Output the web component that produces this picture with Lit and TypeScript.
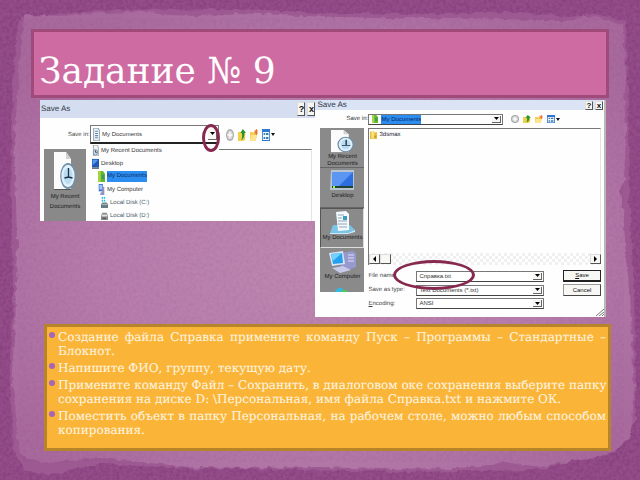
import { LitElement, html, css, svg } from "lit";
import { customElement, property } from "lit/decorators.js";

const shared = css`
  * { box-sizing: border-box; }
  .icon { display: block; flex: none; }
  .win {
    background: #fefefe; color: #333;
    font-family: "Liberation Sans", sans-serif; text-rendering: geometricPrecision;
    font-size: 6px; line-height: 10px; white-space: nowrap;
  }
  .bar { display: flex; align-items: center; gap: 2px; background: #d5def0; color: #333a4a; }
  .bar .name { flex: 1; padding-left: 1px; font-weight: normal; margin: 0; font-size: 8px; }
  button {
    font: inherit; padding: 0; margin: 0; border-radius: 0; color: #111;
    background: #f7f7f4; border: 1px solid #ddd; border-right-color: #555; border-bottom-color: #555;
  }
  .cap { font-weight: bold; font-size: 9px; line-height: 8px; width: 8px; }
  .combo { position: relative; display: flex; align-items: center; background: #fff;
    border: 1px solid #777; border-bottom: 1px solid #444; }
  .combo select {
    appearance: none; border: 0; background: transparent; font: inherit; color: #333;
    flex: 1; min-width: 0; padding: 0 10px 0 2px; margin: 0; border-radius: 0; height: 100%;
  }
  .drop { position: absolute; right: 1px; top: 1px; bottom: 1px; width: 9px; background: #f6f6f4;
    border-right: 1px solid #666; border-bottom: 1px solid #666; pointer-events: none;
    display: grid; place-items: center; }
  .tools { display: flex; align-items: center; gap: 4px; }
  .tools button { background: none; border: 0; }
  .ring { position: absolute; border: 3px solid #87294f; border-radius: 50%; pointer-events: none; }
  .place { display: flex; flex-direction: column; align-items: center; text-align: center; color: #1c1c1c; }
  ul { list-style: none; margin: 0; padding: 0; }
`;

const arrow = html`<span class="drop"><svg class="icon" width="5" height="3" viewBox="0 0 5 3"><path d="M0 0h5L2.5 3z" fill="#000"/></svg></span>`;

const pageClock = (w: number, h: number) => html`
  <svg class="icon" width=${w} height=${h} viewBox="0 0 22 38" preserveAspectRatio="none" aria-hidden="true">
    <path d="M0 0h12l5 7v31H0z" fill="#fbfbfb"/><path d="M12 0v7h5z" fill="#cfd2d4"/>
    <path d="M0 37.500h17" stroke="#555"/>
    <ellipse cx="14" cy="24" rx="7.800" ry="13" fill="#6f8ea6"/>
    <ellipse cx="14" cy="24" rx="6.600" ry="11.200" fill="#dff0fb"/>
    <ellipse cx="14" cy="24" rx="4.500" ry="8" fill="#b9dcf3"/>
    <path d="M14.500 16v9M10.500 26l4-1 4 1" stroke="#234" stroke-width="1.300" fill="none"/>
  </svg>`;

const glyphs: Record<string, unknown> = {
  doc: svg`<path d="M1 0h6l2 2v10H1z" fill="#eef2f6" stroke="#71879c"/><path d="M3 3h4M3 5h4M3 7h4M3 9h4" stroke="#5c86b0"/>`,
  recent: svg`<path d="M2 0h5l2 2v10H2z" fill="#f1f3f5" stroke="#8d969e"/><circle cx="5" cy="8" r="3" fill="#cfe3f0" stroke="#6d8191"/><path d="M5 6v2h2" stroke="#223" fill="none"/>`,
  desk: svg`<path d="M0 1h10v9H0z" fill="#205ab8"/><path d="M1 2h8L1 8z" fill="#5c9be8"/><path d="M0 11h10" stroke="#6c7a88" stroke-width="2"/>`,
  mydoc: svg`<path d="M0 0h7l3 3v9H0z" fill="#62b834"/><path d="M0 0h4v12H0z" fill="#a5d340"/><path d="M5 4h4v5H5z" fill="#3f9a5a"/>`,
  comp: svg`<path d="M1 0h6v8H1z" fill="#3d72d6"/><path d="M2 1h4v5H2z" fill="#9cc8fa"/><path d="M6 3h3v9H3l1-3h2z" fill="#8d93c0"/>`,
  disk: svg`<path d="M1 0h2v2H1zM4 0h2v2H4zM1 3h2v2H1zM4 3h2v2H4z" fill="#1fb9e8"/><path d="M0 8l2-2h6l2 2v4H0z" fill="#667d83"/><path d="M1 8h8" stroke="#c6d7da"/>`,
  drive: svg`<path d="M0 6l2-3h6l2 3v5H0z" fill="#8a8d90"/><path d="M1 5h8v2H1z" fill="#dfe2e4"/><path d="M2 9h5" stroke="#333"/>`,
  folder: svg`<path d="M0 1h4l1 1h5v10H0z" fill="#e9bd3c"/><path d="M2 0h4v11H2z" fill="#f8e383"/><path d="M6 7h3v3H6z" fill="#c99b2b"/>`,
  back: svg`<ellipse cx="5" cy="6" rx="5" ry="6" fill="#aaa"/><ellipse cx="5" cy="6" rx="3.500" ry="4.500" fill="#d6d6d6"/><path d="M5 3v6M2 6h6" stroke="#fff" stroke-width="1.500"/>`,
  up: svg`<path d="M0 3h4l1 1h4v7l-3 1H0z" fill="#f0cf4d"/><path d="M6 0l4 4H8c0 4-1 6-4 7 2-3 1-4 1-7H3z" fill="#259428"/>`,
  fresh: svg`<path d="M0 3h4l1 1h4l-2 8H0z" fill="#f6cf52"/><path d="M1 6h8l-2 6H0z" fill="#fbe58e"/><path d="M8 0v6M5 3h5M6 1l3 4M9 1L6 5" stroke="#ee6a1e"/>`,
  view: svg`<path d="M0 0h10v12H0z" fill="#2e78d2"/><path d="M1 3h8v8H1z" fill="#f3f8ff"/><path d="M2 4h2v2H2zM5 4h3v2H5zM2 8h2v2H2zM5 8h3v2H5z" fill="#3b7d9c"/>`,
};

const glyph = (name: string, w: number, h: number) => html`
  <svg class="icon" width=${w} height=${h} viewBox="0 0 10 12" preserveAspectRatio="none" aria-hidden="true">${glyphs[name]}</svg>`;

const tools = (h: number) => html`
  <button aria-label="Back">${glyph("back", 8, h)}</button>
  <button aria-label="Up">${glyph("up", 8, h)}</button>
  <button aria-label="New folder">${glyph("fresh", 8, h)}</button>
  <button aria-label="Views" class="views">${glyph("view", 8, h)}
    <svg class="icon" width="4" height="3" viewBox="0 0 4 3"><path d="M0 0h4L2 3z" fill="#111"/></svg>
  </button>`;

@customElement("save-dropdown")
class SaveDropdown extends LitElement {
  static styles = [shared, css`
    :host { display: block; min-width: 0; }
    .win { height: 121px; overflow: hidden; }
    .bar { height: 18px; }
    .cap { height: 14px; }
    .row { display: flex; align-items: center; padding: 7px 32px 0 28px; height: 26px; }
    .row label { width: 22px; color: #444; }
    .combo { flex: 1; height: 19px; padding-left: 2px; border-bottom: 2px solid #222; margin-right: 7px; }
    .ring { right: -2px; top: -2px; width: 18px; height: 28px; }
    .drop { bottom: 2px; }
    .views { display: flex; align-items: center; gap: 1px; }
    .row .tools { margin-right: 8px; }
    .body { display: flex; padding: 0 3px 0 4px; }
    .place { width: 42px; height: 72px; background: #898989; padding-top: 3px; margin-top: 5px; }
    .place span { margin-top: 2px; }
    .list { width: 133px; padding-left: 6px; }
    .list li { display: flex; align-items: center; gap: 2px; height: 13px; }
    .list .in { padding-left: 6px; }
    .list .in2 { padding-left: 9px; color: #4a5a6a; }
    .sel span { background: #2c8df0; color: #0b2d68; line-height: 11px; }
    .pane { flex: 1; border-top: 1px solid #777; border-right: 1px solid #e4e4e0; margin-top: 5px; }
  `];
  render() {
    const items: [string, string, string][] = [
      ["recent", "My Recent Documents", ""], ["desk", "Desktop", ""],
      ["mydoc", "My Documents", "in sel"], ["comp", "My Computer", "in"],
      ["disk", "Local Disk (C:)", "in2"], ["drive", "Local Disk (D:)", "in2"],
    ];
    return html`<section class="win">
      <header class="bar"><h2 class="name">Save As</h2>
        <button class="cap">?</button><button class="cap">x</button></header>
      <div class="row">
        <label for="dir">Save in:</label>
        <div class="combo">${glyph("doc", 7, 13)}<select id="dir"><option>My Documents</option></select>${arrow}<span class="ring"></span></div>
        <div class="tools">${tools(12)}</div>
      </div>
      <div class="body">
        <div class="place">${pageClock(22, 38)}<span>My Recent<br>Documents</span></div>
        <ul class="list">${items.map(([g, t, c]) => html`<li class=${c}>${glyph(g, 7, 11)}<span>${t}</span></li>`)}</ul>
        <div class="pane"></div>
      </div>
    </section>`;
  }
}

@customElement("save-dialog")
class SaveDialog extends LitElement {
  static styles = [shared, css`
    :host { display: block; min-width: 0; }
    .win { height: 217px; border-right: 2px solid #b9b9b4; padding-right: 1px; position: relative; }
    .bar { height: 10px; background: #dbe4f5; }
    .bar .name { padding-left: 2px; }
    .cap { height: 9px; line-height: 7px; font-size: 8px; }
    .row { display: flex; align-items: center; height: 18px; padding: 0 43px 0 31px; }
    .row label { width: 22px; }
    .combo { height: 11px; flex: 1; padding-left: 3px; line-height: 9px; }
    .row .combo { margin-right: 8px; }
    .row select { flex: none; width: 40px; padding: 0; margin-left: 3px; height: 9px; background: #2c8df0; color: #07245c; }
    .views { display: flex; align-items: center; gap: 1px; }
    .body { display: flex; padding: 0 2px 0 5px; gap: 4px; }
    .side { width: 44px; height: 164px; background: #8a8a8a; overflow: hidden; line-height: 7px; }
    .side .place { height: 40px; padding-top: 2px; gap: 1px; border-bottom: 1px solid #666; }
    .side .desk { gap: 3px; }
    .side .on { border: 1px solid #555; border-right-color: #ddd; border-bottom-color: #ddd; }
    .side .pc { border: 0; height: 36px; }
    .net { display: block; margin: 2px auto 0; }
    .main { flex: 1; min-width: 0; }
    .files { height: 125px; border: 1px solid #777; border-right-color: #e2e2de; border-bottom: 0; padding: 1px; }
    .files li { display: flex; align-items: center; gap: 2px; color: #223; }
    .scroll { display: flex; height: 12px; padding: 1px 0; border-left: 1px solid #777;
      background: repeating-conic-gradient(#f0f0f0 0 25%, #fff 0 50%) 0 0 / 6px 6px; }
    .scroll button { width: 11px; display: grid; place-items: center; }
    .scroll i { flex: 1; }
    .form { display: grid; grid-template-columns: 48px 1fr 38px; row-gap: 2px; padding-top: 5px; align-items: center; }
    .form label { color: #444; }
    .form .combo { margin-right: 19px; padding: 0; }
    .form button { height: 12px; line-height: 9px; border-color: #999 #444 #444 #999; }
    .form .main-btn { border: 1px solid #222; border-bottom-width: 2px; }
    .form .ring { left: -24px; top: -12px; width: 82px; height: 30px; z-index: 1; }
    .grip { position: absolute; right: 0; bottom: 1px; }
  `];
  render() {
    return html`<section class="win">
      <header class="bar"><h2 class="name">Save As</h2>
        <button class="cap">?</button><button class="cap">x</button></header>
      <div class="row">
        <label for="where">Save in:</label>
        <div class="combo">${glyph("mydoc", 6, 8)}<select id="where"><option>My Documents</option></select>${arrow}</div>
        <div class="tools">${tools(8)}</div>
      </div>
      <div class="body">
        <nav class="side">
          <div class="place">${pageClock(23, 23)}<span>My Recent<br>Documents</span></div>
          <div class="place desk">
            <svg class="icon" width="25" height="20" viewBox="0 0 25 20"><path d="M1 0h23v20H0z" fill="#b8c4d0"/><path d="M2 2h21v15H2z" fill="#2d6fe0"/><path d="M2 2h21L8 17H2z" fill="#5a96f2"/><path d="M2 17h21" stroke="#243" stroke-width="2"/><path d="M3 16h2v2H3z" fill="#9f3"/></svg>
            <span>Desktop</span></div>
          <div class="place on">
            <svg class="icon" width="26" height="23" viewBox="0 0 26 23"><path d="M4 14h17l5 5-7 3H1z" fill="#7cc4e6"/><path d="M1 22h18l7-3v2l-7 2H1z" fill="#c9ecf8"/><path d="M7 1l10-1 3 3v16l-11 1z" fill="#f6f9fc"/><path d="M9 4h6M9 7h4M9 10h9M9 13h9M10 16h8" stroke="#8ba6bb"/><path d="M14 5h4v4h-4z" fill="#3b9dbd"/></svg>
            <span>My Documents</span></div>
          <div class="place pc">
            <svg class="icon" width="27" height="23" viewBox="0 0 27 23"><path d="M12 3l12-2 3 3v13l-9 3-6-2z" fill="#9799cf"/><path d="M19 5h6M19 8h6M19 11h6" stroke="#dfe0f8"/><path d="M0 3l14-2 2 13-13 2z" fill="#d8e6f5"/><path d="M2 4l11-1 1 10-10 1z" fill="#23a0ee"/><path d="M2 4l11-1-9 8z" fill="#72d0fb"/><path d="M3 18l11-2 8 4-11 3z" fill="#c8caeb"/></svg>
            <span>My Computer</span></div>
          <svg class="net" width="14" height="6" viewBox="0 0 14 6"><path d="M0 6a5 5 0 0 1 8-3l1 3z" fill="#35b8dc"/><path d="M6 6a4 4 0 0 1 7 0z" fill="#49cf4e"/></svg>
        </nav>
        <div class="main">
          <ul class="files"><li>${glyph("folder", 7, 8)}<span>3dsmax</span></li></ul>
          <div class="scroll">
            <button aria-label="Left"><svg class="icon" width="3" height="6" viewBox="0 0 3 6"><path d="M3 0v6L0 3z"/></svg></button>
            <button aria-label="Thumb"></button><i></i>
            <button aria-label="Right"><svg class="icon" width="3" height="6" viewBox="0 0 3 6"><path d="M0 0v6l3-3z"/></svg></button>
          </div>
          <div class="form">
            <label for="fn">File name:</label>
            <div class="combo"><select id="fn"><option>Справка.txt</option></select>${arrow}<span class="ring"></span></div>
            <button class="main-btn"><u>S</u>ave</button>
            <label for="ft">Save as type:</label>
            <div class="combo"><select id="ft"><option>Text Documents (*.txt)</option></select>${arrow}</div>
            <button>Cancel</button>
            <label for="en"><u>E</u>ncoding:</label>
            <div class="combo"><select id="en"><option>ANSI</option></select>${arrow}</div>
          </div>
        </div>
      </div>
      <svg class="grip" width="8" height="7" viewBox="0 0 8 7"><path d="M0 7l8-7M3 7l5-4M6 7l2-2" stroke="#777"/></svg>
    </section>`;
  }
}

@customElement("app-root")
class AppRoot extends LitElement {
  @property({ attribute: false }) notes = [
    ["Создание файла Справка примените команду Пуск – Программы – Стандартные –", "Блокнот."],
    ["Напишите ФИО, группу, текущую дату."],
    ["Примените команду Файл – Сохранить, в диалоговом оке сохранения выберите папку", "сохранения на диске D: \\Персональная, имя файла Справка.txt и нажмите ОК."],
    ["Поместить объект в папку Персональная, на рабочем столе, можно любым способом", "копирования."],
  ];
  static styles = css`
    :host { display: block; }
    * { box-sizing: border-box; }
    .slide { position: relative; min-height: 100vh; padding: 29px 29px 29px 31px; background: #8b417e;
      font-family: "DejaVu Serif", serif; overflow: hidden; isolation: isolate; text-rendering: geometricPrecision; }
    .paper { position: absolute; inset: 0; width: 100%; height: 100%; z-index: -1; }
    .title { margin: 0 2px 0 0; border: 3px solid #9f4a78; background: #cf6ba3; color: #fff;
      font-size: 36px; line-height: 44px; font-weight: normal; padding: 18px 5px 1px; }
    .shots { display: grid; grid-template-columns: 275fr 290fr; align-items: start; margin: 2px 5px 7px 9px; }
    .notes { margin: 0 0 0 13px; border: 3px solid #b68429; background: #fab538; color: #fff6e4;
      list-style: none; padding: 3px 2px 8px 11px; font-size: 12px; line-height: 14px; min-height: 127px; }
    .notes li { position: relative; margin-bottom: 3px; }
    .notes span { display: block; text-align: left; white-space: nowrap; }
    .notes span:not(:last-child) { text-align: justify; text-align-last: justify; }
    .notes li::before { content: ""; position: absolute; left: -9px; top: 2px; width: 6px; height: 6px;
      border-radius: 50%; background: #a765b8; }
  `;
  render() {
    return html`<main class="slide">
      <svg class="paper" viewBox="0 0 640 480" preserveAspectRatio="none" aria-hidden="true">
        <defs>
          <radialGradient id="g" cx=".5" cy=".53" r=".62">
            <stop offset="0" stop-color="#be89b1"/><stop offset=".6" stop-color="#b67cab"/><stop offset="1" stop-color="#a8699d"/>
          </radialGradient>
          <filter id="torn" x="-5%" y="-5%" width="110%" height="110%" color-interpolation-filters="sRGB">
            <feTurbulence type="fractalNoise" baseFrequency=".12" numOctaves="3" seed="4"/>
            <feDisplacementMap in="SourceGraphic" scale="6" xChannelSelector="R" yChannelSelector="G"/>
          </filter>
          <filter id="grain" x="0" y="0" width="100%" height="100%" color-interpolation-filters="sRGB">
            <feTurbulence type="fractalNoise" baseFrequency=".3" numOctaves="3" seed="9"/>
            <feColorMatrix values="0 0 0 0 .45  0 0 0 0 .16  0 0 0 0 .4  2 0 0 0 -.7"/>
          </filter>
        </defs>
        <rect width="640" height="480" fill="#934d89"/>
        <rect width="640" height="480" filter="url(#grain)" opacity=".35"/>
        <g filter="url(#torn)">
          <path fill="#9c5992" d="M20 17L110 10 240 9 320 13 430 14 520 12 570 17 600 14 626 22 628 100 629 190 634 290 636 420 618 448 540 470 400 472 300 470 200 469 100 464 50 475 25 470 14 452 10 392 13 300 11 150 14 60z"/>
          <path fill="url(#g)" d="M24 15L60 16 100 13 140 12 170 15 200 16 240 13 300 16 380 18 470 18 540 20 570 20 584 16 600 18 622 24 624 45 626 80 624 100 626 130 624 180 619 190 623 205 626 260 630 290 632 340 634 400 630 436 613 453 590 459 560 463 540 467 510 463 460 468 380 469 320 467 250 468 190 467 140 462 100 458 80 459 50 463 30 460 20 452 17 438 15 400 12 385 15 340 17 240 16 200 14 150 17 100 20 60z"/>
        </g>
        <rect x="18" y="18" width="606" height="444" filter="url(#grain)" opacity=".09"/>
      </svg>
      <h1 class="title">Задание № 9</h1>
      <div class="shots"><save-dropdown></save-dropdown><save-dialog></save-dialog></div>
      <ul class="notes">${this.notes.map((n) => html`<li>${n.map((l) => html`<span>${l} </span>`)}</li>`)}</ul>
    </main>`;
  }
}
